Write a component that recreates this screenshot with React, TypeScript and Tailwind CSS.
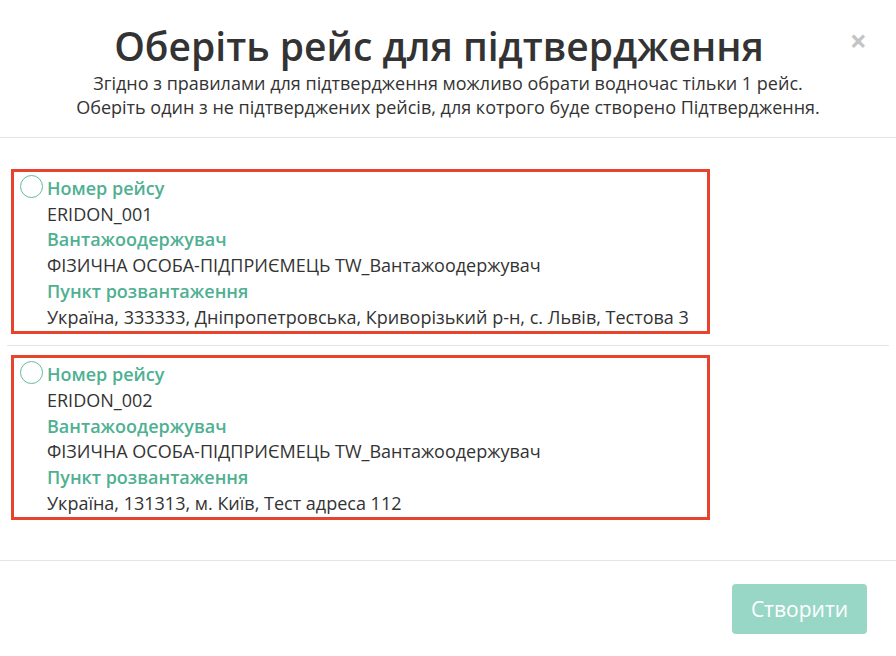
import React from "react";

const trips = [
  {
    id: "ERIDON_001",
    consignee: "ФІЗИЧНА ОСОБА-ПІДПРИЄМЕЦЬ TW_Вантажоодержувач",
    point: "Україна, 333333, Дніпропетровська, Криворізький р-н, с. Львів, Тестова 3",
  },
  {
    id: "ERIDON_002",
    consignee: "ФІЗИЧНА ОСОБА-ПІДПРИЄМЕЦЬ TW_Вантажоодержувач",
    point: "Україна, 131313, м. Київ, Тест адреса 112",
  },
];

function TripCard({ t }: { t: (typeof trips)[number] }) {
  return (
    <div className="ml-[4px] w-[699px] border-[3px] border-[#e8432d] pt-[3px] pb-[1px] pl-[6px] flex gap-[4px]">
      <div className="w-[23px] h-[23px] rounded-full border-[1.5px] border-[#5fbc9f] shrink-0" />
      <div className="text-[18px] leading-[25.7px] pt-[1px]">
        <div className="font-semibold text-[#4fb092]">Номер рейсу</div>
        <div>{t.id}</div>
        <div className="font-semibold text-[#4fb092]">Вантажоодержувач</div>
        <div>{t.consignee}</div>
        <div className="font-semibold text-[#4fb092]">Пункт розвантаження</div>
        <div>{t.point}</div>
      </div>
    </div>
  );
}

export default function App() {
  return (
    <div className="w-[896px] h-[656px] bg-white text-[#333] font-['Open_Sans',sans-serif] flex flex-col relative overflow-hidden">
      <div className="pt-[26px] pb-[18px] border-b border-[#e5e5e5] text-center relative">
        <div className="text-[39px] leading-[40px] font-semibold pr-[18px]">
          Оберіть рейс для підтвердження
        </div>
        <div className="mt-[5px] text-[18px] leading-[24px]">
          <div>Згідно з правилами для підтвердження можливо обрати водночас тільки 1 рейс.</div>
          <div>Оберіть один з не підтверджених рейсів, для котрого буде створено Підтвердження.</div>
        </div>
        <button className="absolute right-[29px] top-[24px] text-[30px] leading-[34px] font-bold text-[#c4c4c4]">
          ×
        </button>
      </div>
      <div className="pt-[31px] pb-[40px] pl-[7px] pr-[7px] flex flex-col">
        <TripCard t={trips[0]} />
        <div className="mt-[11px] mb-[9px] border-t border-[#e5e5e5]" />
        <TripCard t={trips[1]} />
      </div>
      <div className="border-t border-[#e5e5e5] flex justify-end pt-[23px] pr-[29px]">
        <button className="w-[135px] h-[50px] rounded-[4px] bg-[#98d7c6] text-white text-[21px]">
          Створити
        </button>
      </div>
    </div>
  );
}
